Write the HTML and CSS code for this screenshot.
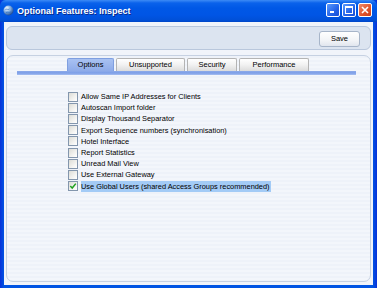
FILE: index.html
```html
<!DOCTYPE html>
<html lang="en">
<head>
  <meta charset="UTF-8" />
  <title>Optional Features: Inspect</title>
  <link rel="stylesheet" href="styles.css">
</head>
<body>
  <div class="window">
    <div class="titlebar">
      <svg class="app-icon" width="11" height="11" viewBox="0 0 11 11">
        <defs>
          <radialGradient id="globe" cx="35%" cy="30%" r="70%">
            <stop offset="0" stop-color="#ffffff"/>
            <stop offset="0.45" stop-color="#8fb8e8"/>
            <stop offset="1" stop-color="#1f4f9a"/>
          </radialGradient>
        </defs>
        <circle cx="5.5" cy="5.5" r="5" fill="url(#globe)"/>
        <path d="M2.5 4.5 C4 3.5 5 5 6.5 4 M3 7.5 C4.5 6.5 6 8 8 7" stroke="#2f6fc0" stroke-width="0.8" fill="none"/>
      </svg>
      <span class="title">Optional Features: Inspect</span>
      <div class="caption-buttons">
        <span class="cap-btn"><span class="min-glyph"></span></span>
        <span class="cap-btn"><span class="max-glyph"></span></span>
        <span class="cap-btn close">
          <svg width="8" height="8" viewBox="0 0 8 8"><path d="M1 1 L7 7 M7 1 L1 7" stroke="#fff" stroke-width="1.6"/></svg>
        </span>
      </div>
    </div>

    <div class="frame">
      <div class="toolbar">
        <button class="save-btn">Save</button>
      </div>

      <div class="main-panel">
        <div class="tabs">
          <span class="tab active tab-options">Options</span>
          <span class="tab tab-unsupported">Unsupported</span>
          <span class="tab tab-security">Security</span>
          <span class="tab tab-performance">Performance</span>
        </div>
        <div class="tab-line"></div>

        <ul class="options">
          <li><span class="box"></span><span class="label">Allow Same IP Addresses for Clients</span></li>
          <li><span class="box"></span><span class="label">Autoscan Import folder</span></li>
          <li><span class="box"></span><span class="label">Display Thousand Separator</span></li>
          <li><span class="box"></span><span class="label">Export Sequence numbers (synchronisation)</span></li>
          <li><span class="box"></span><span class="label">Hotel Interface</span></li>
          <li><span class="box"></span><span class="label">Report Statistics</span></li>
          <li><span class="box"></span><span class="label">Unread Mail View</span></li>
          <li><span class="box"></span><span class="label">Use External Gateway</span></li>
          <li>
            <span class="box checked">
              <svg width="8" height="8" viewBox="0 0 8 8"><path d="M1.3 4 L3.2 6 L6.8 1.6" stroke="#21a121" stroke-width="1.5" fill="none"/></svg>
            </span>
            <span class="label selected">Use Global Users (shared Access Groups recommended)</span>
          </li>
        </ul>
      </div>
    </div>
  </div>
</body>
</html>
```

FILE: styles.css
```css
body {
  margin: 0;
  font-family: "Liberation Sans", Arial, sans-serif;
  background-color: #ffffff;
}
.window {
  width: 377px;
  height: 288px;
  display: flex;
  flex-direction: column;
  background: linear-gradient(to right, #0831d9, #0054e3 4px, #0054e3 373px, #0831d9);
}

/* barra de titulo estilo XP */
.titlebar {
  height: 22px;
  display: flex;
  align-items: center;
  padding: 0 5px 0 3px;
  background: linear-gradient(to bottom, #3d8bf5 0, #0a62eb 3px, #0058e6 8px, #0055e5 15px, #0050d8 20px, #0045c8 22px);
  border-radius: 6px 6px 0 0;
}
.app-icon {
  margin-right: 3px;
  margin-top: -1px;
}
.title {
  flex: 1;
  color: #ffffff;
  font-weight: bold;
  font-size: 9px;
  text-shadow: 1px 1px 0 #0a2a8a;
  margin-top: -1px;
}
.caption-buttons {
  display: flex;
  gap: 2px;
  margin-top: -2px;
}
.cap-btn {
  width: 12px;
  height: 12px;
  border: 1px solid #ffffff;
  border-radius: 2px;
  background: linear-gradient(135deg, #5a9bff, #2563e8 60%, #1a4fd4);
  display: flex;
  align-items: center;
  justify-content: center;
  position: relative;
}
.cap-btn.close {
  background: linear-gradient(135deg, #f08a6a, #e0532b 60%, #c8401c);
}
.min-glyph {
  position: absolute;
  left: 3px;
  bottom: 3px;
  width: 4px;
  height: 2px;
  background: #fff;
}
.max-glyph {
  width: 6px;
  height: 5px;
  border: 1px solid #fff;
  border-top-width: 2px;
}

.frame {
  flex: 1;
  margin: 0 4px 3px 4px;
  background: #f1f4fa;
  padding: 4px 2px 3px 2px;
  display: flex;
  flex-direction: column;
  gap: 5px;
}
.toolbar {
  height: 22px;
  border: 1px solid #b9c7dc;
  border-radius: 6px;
  background: #dce4f0;
  display: flex;
  justify-content: flex-end;
  align-items: center;
  padding-right: 10px;
}
.save-btn {
  width: 41px;
  height: 16px;
  padding: 0;
  border: 1px solid #a7b5c9;
  border-radius: 3px;
  background: linear-gradient(to bottom, #ffffff, #f2f4f7 60%, #e1e6ee);
  font-family: "Liberation Sans", Arial, sans-serif;
  font-size: 7.5px;
  color: #000;
  margin-top: 1px;
}

.main-panel {
  flex: 1;
  border: 1px solid #c6d1e2;
  border-radius: 7px;
  background: repeating-linear-gradient(to bottom, #eef2f9 0, #eef2f9 2px, #f3f6fb 2px, #f3f6fb 4px);
}
.tabs {
  display: flex;
  gap: 2px;
  padding: 2px 0 0 60px;
}
.tab {
  height: 13px;
  box-sizing: border-box;
  border: 1px solid #b4b4b4;
  border-bottom: none;
  border-radius: 2px 2px 0 0;
  background: linear-gradient(to bottom, #ffffff, #f1f1f1 50%, #dcdcdc);
  font-size: 7.5px;
  text-align: center;
  line-height: 12px;
  color: #000;
}
.tab.active {
  border-color: #7f9fe0;
  background: linear-gradient(to bottom, #a9c2f2, #8eabe9);
}
.tab-options { width: 47px; }
.tab-unsupported { width: 69px; }
.tab-security { width: 50px; }
.tab-performance { width: 70px; }
.tab-line {
  height: 4px;
  margin: 0 14px 0 10px;
  background: linear-gradient(to bottom, #8eabe9, #7c9ee8 2px, #a9c0f0);
}

.options {
  list-style: none;
  margin: 16px 0 0 0;
  padding: 0 0 0 61px;
}
.options li {
  height: 11.2px;
  display: flex;
  align-items: center;
  font-size: 7.4px;
  color: #000;
}
.box {
  width: 8px;
  height: 8px;
  border: 1px solid #8396ad;
  background: linear-gradient(135deg, #dcdcd6, #f6f6f4 70%, #ffffff);
  margin-right: 3px;
  display: flex;
  align-items: center;
  justify-content: center;
}
.label {
  padding-right: 1px;
  line-height: 11px;
}
.label.selected {
  background: #a3cbf6;
}
```
